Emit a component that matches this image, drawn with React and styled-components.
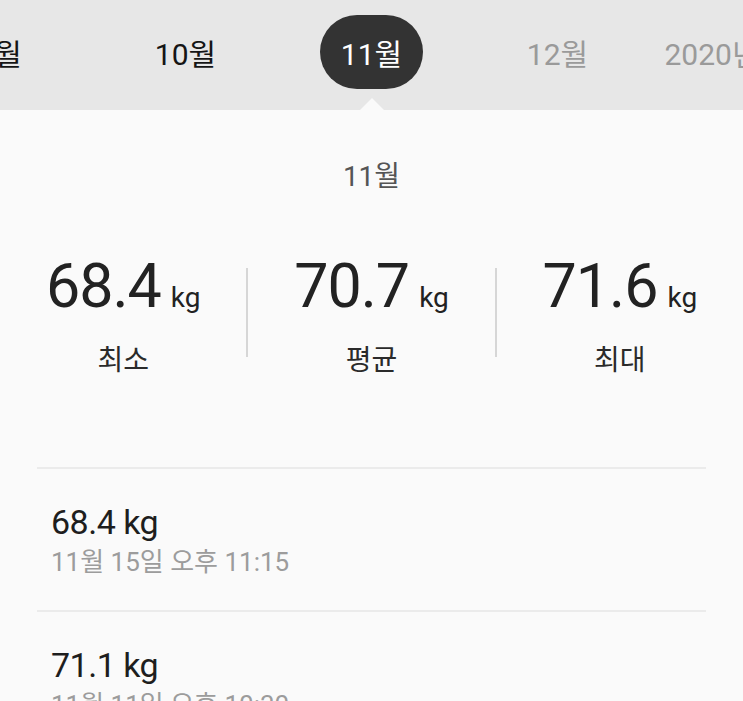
import React from 'react';
import styled, { createGlobalStyle } from 'styled-components';

const GlobalStyle = createGlobalStyle`
  body {
    margin: 0;
    background: #fafafa;
    font-family: Roboto, "Noto Sans CJK KR", sans-serif;
  }
`;

const Page = styled.div`
  width: 743px;
  height: 701px;
  overflow: hidden;
  background: #fafafa;
`;

const MonthBar = styled.div`
  position: relative;
  height: 110px;
  box-sizing: border-box;
  padding-bottom: 6px;
  background: #e7e7e7;
  display: flex;
  justify-content: center;
  align-items: center;
  overflow: hidden;
`;

const MonthItem = styled.div`
  flex: 0 0 186px;
  display: flex;
  justify-content: ${p => (p.$start ? 'flex-start' : 'center')};
  padding-left: ${p => (p.$start ? '14px' : '0')};
  box-sizing: border-box;
  font-size: 30px;
  color: ${p => (p.$muted ? '#9a9a9a' : '#151515')};
`;

const Pill = styled.div`
  width: 103px;
  height: 74px;
  border-radius: 37px;
  background: #333333;
  color: #ffffff;
  display: flex;
  align-items: center;
  justify-content: center;
`;

const Pointer = styled.div`
  position: absolute;
  left: 360px;
  bottom: 0;
  width: 0;
  height: 0;
  border-left: 12px solid transparent;
  border-right: 12px solid transparent;
  border-bottom: 12px solid #fafafa;
`;

const Title = styled.div`
  padding-top: 47px;
  text-align: center;
  font-size: 28px;
  line-height: 40px;
  color: #555555;
`;

const Stats = styled.div`
  display: grid;
  grid-template-columns: 1fr 2px 1fr 2px 1fr;
  margin-top: 58px;
`;

const Stat = styled.div`
  display: flex;
  flex-direction: column;
  align-items: center;
`;

const ValueLine = styled.div`
  display: flex;
  align-items: baseline;
  gap: 10px;
  color: #222222;
`;

const Big = styled.span`
  font-size: 61px;
  line-height: 62px;
  letter-spacing: -1px;
`;

const Unit = styled.span`
  font-size: 28px;
`;

const StatLabel = styled.div`
  margin-top: 24px;
  font-size: 28px;
  line-height: 40px;
  color: #2a2a2a;
`;

const Divider = styled.div`
  align-self: start;
  margin-top: 13px;
  height: 89px;
  background: #d6d6d6;
`;

const List = styled.div`
  margin: 86px 37px 0;
`;

const Row = styled.div`
  border-top: 2px solid #ebebeb;
  padding: 33px 14px 31px;
`;

const RowValue = styled.div`
  font-size: 34px;
  line-height: 40px;
  color: #1e1e1e;
  letter-spacing: -0.5px;
`;

const RowDate = styled.div`
  margin-top: 3px;
  font-size: 26px;
  line-height: 34px;
  color: #9c9c9c;
`;

const months = [
  { label: '9월' },
  { label: '10월' },
  { label: '11월', active: true },
  { label: '12월', muted: true },
  { label: '2020년', muted: true, start: true },
];

const stats = [
  { value: '68.4', label: '최소' },
  { value: '70.7', label: '평균' },
  { value: '71.6', label: '최대' },
];

const records = [
  { value: '68.4 kg', date: '11월 15일 오후 11:15' },
  { value: '71.1 kg', date: '11월 11일 오후 10:30' },
];

export default function App() {
  return (
    <Page>
      <GlobalStyle />
      <MonthBar>
        {months.map(m => (
          <MonthItem key={m.label} $muted={m.muted} $start={m.start}>
            {m.active ? <Pill>{m.label}</Pill> : m.label}
          </MonthItem>
        ))}
        <Pointer />
      </MonthBar>
      <Title>11월</Title>
      <Stats>
        {stats.map((s, i) => (
          <React.Fragment key={s.label}>
            {i > 0 && <Divider />}
            <Stat>
              <ValueLine>
                <Big>{s.value}</Big>
                <Unit>kg</Unit>
              </ValueLine>
              <StatLabel>{s.label}</StatLabel>
            </Stat>
          </React.Fragment>
        ))}
      </Stats>
      <List>
        {records.map(r => (
          <Row key={r.date}>
            <RowValue>{r.value}</RowValue>
            <RowDate>{r.date}</RowDate>
          </Row>
        ))}
      </List>
    </Page>
  );
}
